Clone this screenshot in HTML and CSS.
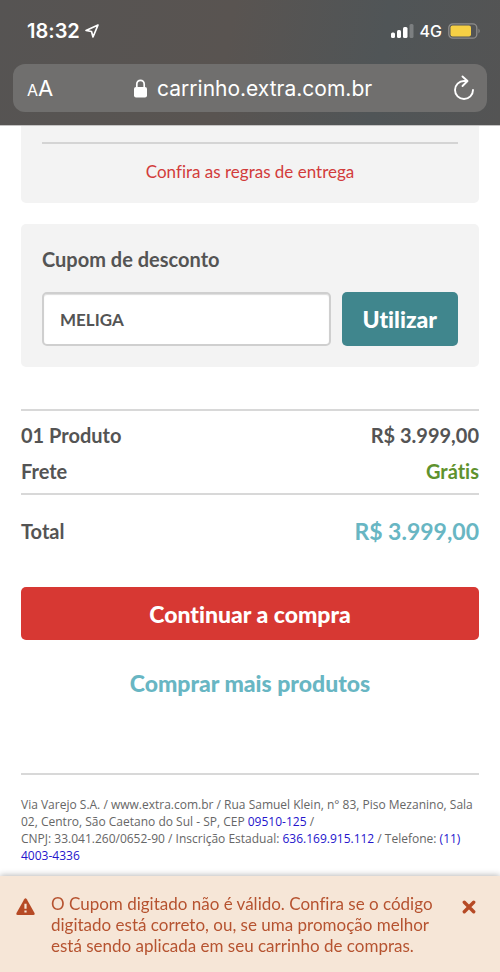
FILE: index.html
```html
<!DOCTYPE html>
<html lang="pt-BR">
<head>
<meta charset="utf-8">
<meta name="viewport" content="width=device-width, initial-scale=1">
<title>Carrinho</title>
<link rel="stylesheet" href="styles.css">
</head>
<body>
<header class="browser">
  <div class="status">
    <div class="status-group status-left">
      <span class="clock">18:32</span>
      <svg width="16" height="16" viewBox="0 0 16 16" fill="none" stroke="#fff" stroke-width="1.700" stroke-linejoin="round"><path d="M14 2 2 7.500 7.500 8.500 9 14Z"/></svg>
    </div>
    <div class="status-group status-right">
      <svg width="23" height="16" viewBox="0 0 23 16" fill="#fff"><rect x="0" y="9.500" width="4" height="5.500" rx="1.500"/><rect x="6" y="7" width="4" height="8" rx="1.500"/><rect x="12" y="4" width="4.500" height="11" rx="1.500"/><rect x="18.500" y="1" width="4" height="14" rx="1.500" opacity=".25"/></svg>
      <span class="network">4G</span>
      <svg width="33" height="16" viewBox="0 0 33 16"><rect x=".8" y=".8" width="28" height="14.400" rx="4" fill="none" stroke="#8d8c8b" stroke-width="1.300"/><rect x="2.500" y="2.500" width="20.500" height="11" rx="2" fill="#f6d045"/><path d="M30.500 5.500q2.500 2.500 0 5Z" fill="#8d8c8b"/></svg>
    </div>
  </div>
  <div class="address">
    <button class="plain text-size" type="button" aria-label="Tamanho do texto"><span class="small-a">A</span>A</button>
    <div class="url">
      <svg width="13" height="19" viewBox="0 0 13 19"><rect x="0" y="8" width="13" height="10.500" rx="2" fill="#fff"/><path d="M2.800 9V5.200a3.700 3.900 0 0 1 7.400 0V9" fill="none" stroke="#fff" stroke-width="1.700"/></svg>
      <span>carrinho.extra.com.br</span>
    </div>
    <button class="plain" type="button" aria-label="Recarregar"><svg width="22" height="26" viewBox="0 0 22 26" fill="none" stroke="#fff" stroke-width="1.900" stroke-linecap="round" stroke-linejoin="round"><path d="M14 6H11A9 9 0 1 0 20 15M9.500 1.500 14.500 6 9.500 11"/></svg></button>
  </div>
</header>
<main class="page">
  <section class="card delivery">
    <a class="rules" href="#regras">Confira as regras de entrega</a>
  </section>
  <form class="card coupon">
    <label class="coupon-label" for="cupom">Cupom de desconto</label>
    <div class="coupon-row">
      <input class="field" id="cupom" type="text" value="MELIGA">
      <button class="btn btn-use" type="button">Utilizar</button>
    </div>
  </form>
  <dl class="summary">
    <div class="row"><dt>01 Produto</dt><dd>R$ 3.999,00</dd></div>
    <div class="row"><dt>Frete</dt><dd class="free">Grátis</dd></div>
  </dl>
  <dl class="total row"><dt>Total</dt><dd class="amount">R$ 3.999,00</dd></dl>
  <button class="btn btn-buy" type="button">Continuar a compra</button>
  <a class="more" href="#produtos">Comprar mais produtos</a>
  <footer class="legal">
    Via Varejo S.A. / www.extra.com.br / Rua Samuel Klein, n° 83, Piso Mezanino, Sala<br>
    02, Centro, São Caetano do Sul - SP, CEP <a href="#cep">09510-125</a> /<br>
    CNPJ: 33.041.260/0652-90 / Inscrição Estadual: <a href="#ie">636.169.915.112</a> / Telefone: <a href="#tel">(11)<br>4003-4336</a>
  </footer>
</main>
<div class="toast" role="alert">
  <svg class="warn" width="19" height="18" viewBox="0 0 19 18"><path d="M8.200 1.200Q9.500-.6 10.800 1.200L18.500 15Q19.200 17 17.300 17H1.700Q-.2 17 .5 15Z" fill="#b64a25"/><path d="M9.500 5.800V10.800M9.500 12.400V14.400" stroke="#f6e6d7" stroke-width="2.200"/></svg>
  <p class="message">O Cupom digitado não é válido. Confira se o código<br>digitado está correto, ou, se uma promoção melhor<br>está sendo aplicada em seu carrinho de compras.</p>
  <button class="plain close" type="button" aria-label="Fechar"><svg width="14" height="14" viewBox="0 0 14 14" stroke="#b64a25" stroke-width="3.400" stroke-linecap="round"><path d="M2.300 2.300 11.700 11.700M11.700 2.300 2.300 11.700"/></svg></button>
</div>
</body>
</html>
```
FILE: styles.css
```css
* { box-sizing: border-box; }

body {
  margin: 0;
  min-height: 100vh;
  background: #fff;
  color: #545454;
  font-family: Lato, "Open Sans", sans-serif;
  font-variant-ligatures: none;
}

svg { display: block; flex: none; }

a { text-decoration: none; }

.plain {
  padding: 0;
  border: 0;
  background: none;
  color: inherit;
  font: inherit;
}

.browser {
  padding: 0 13px 13px;
  border-bottom: 1px solid #c4c3c3;
  background: linear-gradient(100deg, #565453, #595451 45%, #505557 75%, #545454);
  color: #fff;
  font-family: Inter, sans-serif;
}

.status {
  display: flex;
  justify-content: space-between;
  align-items: center;
  height: 64px;
  padding: 0 6px 2px 14px;
}

.status-group { display: flex; align-items: center; }
.status-left { gap: 4px; }
.status-right { gap: 6px; }

.clock { font-size: 20px; font-weight: 600; }
.network { font-size: 16px; font-weight: 500; }

.address {
  display: flex;
  justify-content: space-between;
  align-items: center;
  height: 48px;
  padding: 0 12px 0 14px;
  border-radius: 12px;
  background: #706f6e;
}

.text-size { font-size: 22px; }
.small-a { font-size: 16px; }

.url {
  display: flex;
  align-items: center;
  gap: 10px;
  font-size: 21px;
}

.page {
  display: flex;
  flex-direction: column;
  padding: 0 21px 110px;
}

.card {
  padding: 21px;
  border-radius: 5px;
  background: #f3f3f3;
}

.delivery {
  padding-top: 16px;
  border-top-left-radius: 0;
  border-top-right-radius: 0;
}

.rules {
  display: block;
  padding-top: 18px;
  border-top: 2px solid #d4d4d4;
  color: #d23c3b;
  font-size: 17px;
  line-height: 20px;
  text-align: center;
}

.coupon { margin-top: 21px; }

.coupon-label {
  display: block;
  margin: 2px 0 21px;
  font-size: 20px;
  font-weight: 700;
  line-height: 24px;
}

.coupon-row { display: flex; gap: 11px; }

.field {
  flex: 1;
  min-width: 0;
  height: 54px;
  padding: 0 16px;
  border: 2px solid #cfcfcf;
  border-radius: 5px;
  background: #fff;
  box-shadow: inset 0 1px 1px #ddd;
  color: #545454;
  font-family: inherit;
  font-size: 17px;
  font-weight: 700;
}

.btn {
  height: 53px;
  padding: 0 21px;
  border: 0;
  border-radius: 5px;
  color: #fff;
  font-family: inherit;
  font-size: 23px;
  font-variant-ligatures: none;
  font-weight: 900;
}

.btn-use { height: 54px; background: #40868d; }
.btn-buy { background: #d73833; }

.summary {
  margin: 42px 0 0;
  padding: 6px 0 4px;
  border-top: 2px solid #d8d8d8;
  border-bottom: 2px solid #d8d8d8;
}

.row {
  display: flex;
  justify-content: space-between;
  align-items: center;
  font-size: 20px;
  font-weight: 700;
  line-height: 36px;
}

.row dd { margin: 0; }
.row .free { color: #5f922e; }
.row .amount { color: #68b6c3; font-size: 23px; }

.total { margin: 18px 0 38px; }

.more {
  margin: 29px 0 76px;
  color: #68b6c3;
  font-size: 23px;
  font-weight: 900;
  line-height: 28px;
  text-align: center;
}

.legal {
  padding-top: 21px;
  border-top: 2px solid #d8d8d8;
  color: #666;
  font-family: "Open Sans", sans-serif;
  font-size: 12px;
  line-height: 17px;
  white-space: nowrap;
}

.legal a { color: #2514cc; }

.toast {
  position: fixed;
  right: 0;
  bottom: 0;
  left: 0;
  display: flex;
  align-items: flex-start;
  padding: 17px 24px 16px 16px;
  background: #f6e6d7;
  box-shadow: 0 -1px 6px #bbb;
  color: #b65330;
}

.warn { margin: 5px 16px 0 0; }

.message {
  flex: 1;
  margin: 0;
  font-size: 17px;
  line-height: 21px;
}

.close { margin-top: 7px; }
```
